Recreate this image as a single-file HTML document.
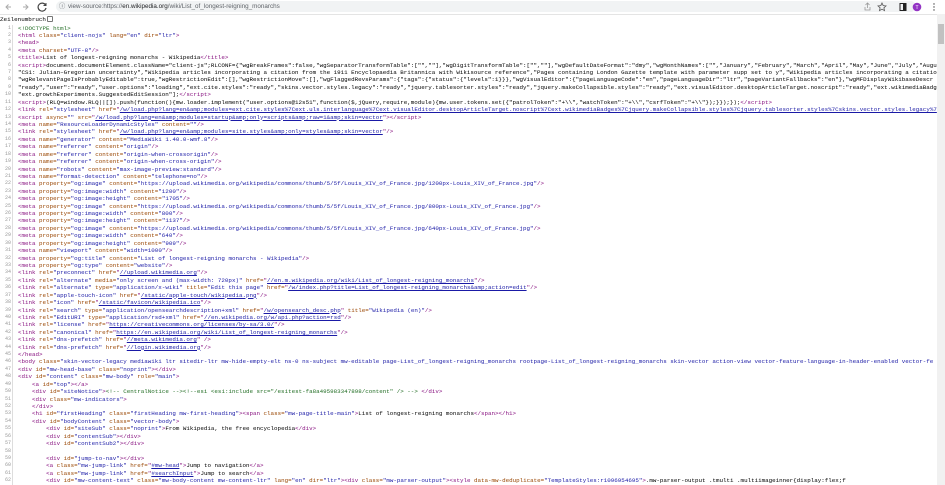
<!DOCTYPE html>
<html><head><meta charset="utf-8">
<style>
*{margin:0;padding:0;box-sizing:border-box}
body{width:945px;height:485px;overflow:hidden;background:#fff;font-family:"Liberation Sans",sans-serif;position:relative}
.bar{position:absolute;left:0;top:0;width:945px;height:14px;background:#fff}
.omni{position:absolute;left:56px;top:1px;width:860px;height:11px;background:#f1f3f4;border-radius:6px;font-size:6.3px;line-height:11px;color:#5f6368;padding-left:12px}
.omni b{font-weight:normal;color:#202124}
.sep{position:absolute;left:0;top:14px;width:937px;height:1px;background:#e4e4e4}
.zeil{position:absolute;left:0;top:16px;font-family:"Liberation Mono",monospace;font-size:5.9px;color:#000;line-height:8px}
.zeil i{display:inline-block;width:6px;height:6px;border:1px solid #777;border-radius:1px;vertical-align:-1px;margin-left:1px}
.code{position:absolute;left:0;top:24.5px;width:937px;font-family:"Liberation Mono",monospace;font-size:5.85px;line-height:7.43px;color:#000}
.code div{height:7.43px;overflow:hidden;white-space:pre}
.code s{text-decoration:none;display:inline-block;width:13px;text-align:right;color:#999;margin-right:5px;padding-right:1px;border-right:1px solid #ddd;font-size:5px;line-height:7.43px;vertical-align:top}
.t{color:#881280}.a{color:#994500}.v{color:#1a1aa6}.l{color:#1a1aa6;text-decoration:underline}.c{color:#236e25}
.sb{position:absolute;right:0;top:14px;width:8px;height:471px;background:#f1f1f1}
.sb i{position:absolute;left:1px;top:10px;width:6px;height:20px;background:#c1c1c1}
</style></head><body>
<div class="bar">
<svg style="position:absolute;left:5px;top:2px" width="44" height="10" viewBox="0 0 44 10"><path d="M6 5H1M3.5 2.5L1 5l2.5 2.5" stroke="#aaa" fill="none" stroke-width="1"/><path d="M18 5h5M20.5 2.5L23 5l-2.5 2.5" stroke="#aaa" fill="none" stroke-width="1"/><path d="M40.5 3A4 4 0 1 0 41 6" stroke="#444" fill="none" stroke-width="1.2"/><path d="M41 1v2.5h-2.5" stroke="#444" fill="none" stroke-width="1"/></svg>
<div class="omni"><span style="position:absolute;left:3px;top:0">ⓘ</span>view-source:https://<b>en.wikipedia.org</b>/wiki/List_of_longest-reigning_monarchs</div>
<svg style="position:absolute;left:862px;top:2px" width="83" height="10" viewBox="0 0 83 10"><path d="M3 5v3h5V5M5.5 1v5M3.5 3l2-2 2 2" stroke="#999" fill="none" stroke-width=".8"/><path d="M20 1l1.2 2.6 2.8.3-2.1 1.9.6 2.8L20 7.2l-2.5 1.4.6-2.8-2.1-1.9 2.8-.3z" stroke="#555" fill="none" stroke-width=".8"/><rect x="38" y="1.5" width="6" height="7" fill="none" stroke="#222" stroke-width="1"/><rect x="41" y="1.5" width="3" height="7" fill="#222"/><circle cx="55" cy="5" r="4.3" fill="#9334c4"/><text x="55" y="7" font-size="5" fill="#fff" text-anchor="middle" font-family="Liberation Sans">T</text><circle cx="72" cy="2" r=".7" fill="#444"/><circle cx="72" cy="5" r=".7" fill="#444"/><circle cx="72" cy="8" r=".7" fill="#444"/></svg>
</div>
<div class="sep"></div>
<div class="zeil">Zeilenumbruch<i></i></div>
<div class="code">
<div><s>1</s><span class="c">&lt;!DOCTYPE html&gt;</span></div>
<div><s>2</s><span class="t">&lt;html <span class="a">class=</span><span class="v">"client-nojs"</span> <span class="a">lang=</span><span class="v">"en"</span> <span class="a">dir=</span><span class="v">"ltr"</span>&gt;</span></div>
<div><s>3</s><span class="t">&lt;head&gt;</span></div>
<div><s>4</s><span class="t">&lt;meta <span class="a">charset=</span><span class="v">"UTF-8"</span>/&gt;</span></div>
<div><s>5</s><span class="t">&lt;title&gt;</span>List of longest-reigning monarchs - Wikipedia<span class="t">&lt;/title&gt;</span></div>
<div><s>6</s><span class="t">&lt;script&gt;</span>document.documentElement.className="client-js";RLCONF={"wgBreakFrames":false,"wgSeparatorTransformTable":["",""],"wgDigitTransformTable":["",""],"wgDefaultDateFormat":"dmy","wgMonthNames":["","January","February","March","April","May","June","July","August"</div>
<div><s>7</s>"CS1: Julian–Gregorian uncertainty","Wikipedia articles incorporating a citation from the 1911 Encyclopaedia Britannica with Wikisource reference","Pages containing London Gazette template with parameter supp set to y","Wikipedia articles incorporating a citation</div>
<div><s>8</s>"wgRelevantPageIsProbablyEditable":true,"wgRestrictionEdit":[],"wgRestrictionMove":[],"wgFlaggedRevsParams":{"tags":{"status":{"levels":1}}},"wgVisualEditor":{"pageLanguageCode":"en","pageLanguageDir":"ltr","pageVariantFallbacks":"en"},"wgMFDisplayWikibaseDescr</div>
<div><s>9</s>"ready","user":"ready","user.options":"loading","ext.cite.styles":"ready","skins.vector.styles.legacy":"ready","jquery.tablesorter.styles":"ready","jquery.makeCollapsible.styles":"ready","ext.visualEditor.desktopArticleTarget.noscript":"ready","ext.wikimediaBadges</div>
<div><s>10</s>"ext.growthExperiments.SuggestedEditSession"];<span class="t">&lt;/script&gt;</span></div>
<div><s>11</s><span class="t">&lt;script&gt;</span>(RLQ=window.RLQ||[]).push(function(){mw.loader.implement("user.options@12s51",function($,jQuery,require,module){mw.user.tokens.set({"patrolToken":"+\\","watchToken":"+\\","csrfToken":"+\\"});}});});<span class="t">&lt;/script&gt;</span></div>
<div><s>12</s><span class="t">&lt;link <span class="a">rel=</span><span class="v">"stylesheet"</span> <span class="a">href=</span>"<span class="l">/w/load.php?lang=en&amp;amp;modules=ext.cite.styles%7Cext.uls.interlanguage%7Cext.visualEditor.desktopArticleTarget.noscript%7Cext.wikimediaBadges%7Cjquery.makeCollapsible.styles%7Cjquery.tablesorter.styles%7Cskins.vector.styles.legacy%7</span></span></div>
<div><s>13</s><span class="t">&lt;script <span class="a">async=</span><span class="v">""</span> <span class="a">src=</span>"<span class="l">/w/load.php?lang=en&amp;amp;modules=startup&amp;amp;only=scripts&amp;amp;raw=1&amp;amp;skin=vector</span>"&gt;&lt;/script&gt;</span></div>
<div><s>14</s><span class="t">&lt;meta <span class="a">name=</span><span class="v">"ResourceLoaderDynamicStyles"</span> <span class="a">content=</span><span class="v">""</span>/&gt;</span></div>
<div><s>15</s><span class="t">&lt;link <span class="a">rel=</span><span class="v">"stylesheet"</span> <span class="a">href=</span>"<span class="l">/w/load.php?lang=en&amp;amp;modules=site.styles&amp;amp;only=styles&amp;amp;skin=vector</span>"/&gt;</span></div>
<div><s>16</s><span class="t">&lt;meta <span class="a">name=</span><span class="v">"generator"</span> <span class="a">content=</span><span class="v">"MediaWiki 1.40.0-wmf.8"</span>/&gt;</span></div>
<div><s>17</s><span class="t">&lt;meta <span class="a">name=</span><span class="v">"referrer"</span> <span class="a">content=</span><span class="v">"origin"</span>/&gt;</span></div>
<div><s>18</s><span class="t">&lt;meta <span class="a">name=</span><span class="v">"referrer"</span> <span class="a">content=</span><span class="v">"origin-when-crossorigin"</span>/&gt;</span></div>
<div><s>19</s><span class="t">&lt;meta <span class="a">name=</span><span class="v">"referrer"</span> <span class="a">content=</span><span class="v">"origin-when-cross-origin"</span>/&gt;</span></div>
<div><s>20</s><span class="t">&lt;meta <span class="a">name=</span><span class="v">"robots"</span> <span class="a">content=</span><span class="v">"max-image-preview:standard"</span>/&gt;</span></div>
<div><s>21</s><span class="t">&lt;meta <span class="a">name=</span><span class="v">"format-detection"</span> <span class="a">content=</span><span class="v">"telephone=no"</span>/&gt;</span></div>
<div><s>22</s><span class="t">&lt;meta <span class="a">property=</span><span class="v">"og:image"</span> <span class="a">content=</span><span class="v">"https://upload.wikimedia.org/wikipedia/commons/thumb/5/5f/Louis_XIV_of_France.jpg/1200px-Louis_XIV_of_France.jpg"</span>/&gt;</span></div>
<div><s>23</s><span class="t">&lt;meta <span class="a">property=</span><span class="v">"og:image:width"</span> <span class="a">content=</span><span class="v">"1200"</span>/&gt;</span></div>
<div><s>24</s><span class="t">&lt;meta <span class="a">property=</span><span class="v">"og:image:height"</span> <span class="a">content=</span><span class="v">"1705"</span>/&gt;</span></div>
<div><s>25</s><span class="t">&lt;meta <span class="a">property=</span><span class="v">"og:image"</span> <span class="a">content=</span><span class="v">"https://upload.wikimedia.org/wikipedia/commons/thumb/5/5f/Louis_XIV_of_France.jpg/800px-Louis_XIV_of_France.jpg"</span>/&gt;</span></div>
<div><s>26</s><span class="t">&lt;meta <span class="a">property=</span><span class="v">"og:image:width"</span> <span class="a">content=</span><span class="v">"800"</span>/&gt;</span></div>
<div><s>27</s><span class="t">&lt;meta <span class="a">property=</span><span class="v">"og:image:height"</span> <span class="a">content=</span><span class="v">"1137"</span>/&gt;</span></div>
<div><s>28</s><span class="t">&lt;meta <span class="a">property=</span><span class="v">"og:image"</span> <span class="a">content=</span><span class="v">"https://upload.wikimedia.org/wikipedia/commons/thumb/5/5f/Louis_XIV_of_France.jpg/640px-Louis_XIV_of_France.jpg"</span>/&gt;</span></div>
<div><s>29</s><span class="t">&lt;meta <span class="a">property=</span><span class="v">"og:image:width"</span> <span class="a">content=</span><span class="v">"640"</span>/&gt;</span></div>
<div><s>30</s><span class="t">&lt;meta <span class="a">property=</span><span class="v">"og:image:height"</span> <span class="a">content=</span><span class="v">"909"</span>/&gt;</span></div>
<div><s>31</s><span class="t">&lt;meta <span class="a">name=</span><span class="v">"viewport"</span> <span class="a">content=</span><span class="v">"width=1000"</span>/&gt;</span></div>
<div><s>32</s><span class="t">&lt;meta <span class="a">property=</span><span class="v">"og:title"</span> <span class="a">content=</span><span class="v">"List of longest-reigning monarchs - Wikipedia"</span>/&gt;</span></div>
<div><s>33</s><span class="t">&lt;meta <span class="a">property=</span><span class="v">"og:type"</span> <span class="a">content=</span><span class="v">"website"</span>/&gt;</span></div>
<div><s>34</s><span class="t">&lt;link <span class="a">rel=</span><span class="v">"preconnect"</span> <span class="a">href=</span>"<span class="l">//upload.wikimedia.org</span>"/&gt;</span></div>
<div><s>35</s><span class="t">&lt;link <span class="a">rel=</span><span class="v">"alternate"</span> <span class="a">media=</span><span class="v">"only screen and (max-width: 720px)"</span> <span class="a">href=</span>"<span class="l">//en.m.wikipedia.org/wiki/List_of_longest-reigning_monarchs</span>"/&gt;</span></div>
<div><s>36</s><span class="t">&lt;link <span class="a">rel=</span><span class="v">"alternate"</span> <span class="a">type=</span><span class="v">"application/x-wiki"</span> <span class="a">title=</span><span class="v">"Edit this page"</span> <span class="a">href=</span>"<span class="l">/w/index.php?title=List_of_longest-reigning_monarchs&amp;amp;action=edit</span>"/&gt;</span></div>
<div><s>37</s><span class="t">&lt;link <span class="a">rel=</span><span class="v">"apple-touch-icon"</span> <span class="a">href=</span>"<span class="l">/static/apple-touch/wikipedia.png</span>"/&gt;</span></div>
<div><s>38</s><span class="t">&lt;link <span class="a">rel=</span><span class="v">"icon"</span> <span class="a">href=</span>"<span class="l">/static/favicon/wikipedia.ico</span>"/&gt;</span></div>
<div><s>39</s><span class="t">&lt;link <span class="a">rel=</span><span class="v">"search"</span> <span class="a">type=</span><span class="v">"application/opensearchdescription+xml"</span> <span class="a">href=</span>"<span class="l">/w/opensearch_desc.php</span>" <span class="a">title=</span><span class="v">"Wikipedia (en)"</span>/&gt;</span></div>
<div><s>40</s><span class="t">&lt;link <span class="a">rel=</span><span class="v">"EditURI"</span> <span class="a">type=</span><span class="v">"application/rsd+xml"</span> <span class="a">href=</span>"<span class="l">//en.wikipedia.org/w/api.php?action=rsd</span>"/&gt;</span></div>
<div><s>41</s><span class="t">&lt;link <span class="a">rel=</span><span class="v">"license"</span> <span class="a">href=</span>"<span class="l">https://creativecommons.org/licenses/by-sa/3.0/</span>"/&gt;</span></div>
<div><s>42</s><span class="t">&lt;link <span class="a">rel=</span><span class="v">"canonical"</span> <span class="a">href=</span>"<span class="l">https://en.wikipedia.org/wiki/List_of_longest-reigning_monarchs</span>"/&gt;</span></div>
<div><s>43</s><span class="t">&lt;link <span class="a">rel=</span><span class="v">"dns-prefetch"</span> <span class="a">href=</span>"<span class="l">//meta.wikimedia.org</span>" /&gt;</span></div>
<div><s>44</s><span class="t">&lt;link <span class="a">rel=</span><span class="v">"dns-prefetch"</span> <span class="a">href=</span>"<span class="l">//login.wikimedia.org</span>"/&gt;</span></div>
<div><s>45</s><span class="t">&lt;/head&gt;</span></div>
<div><s>46</s><span class="t">&lt;body <span class="a">class=</span><span class="v">"skin-vector-legacy mediawiki ltr sitedir-ltr mw-hide-empty-elt ns-0 ns-subject mw-editable page-List_of_longest-reigning_monarchs rootpage-List_of_longest-reigning_monarchs skin-vector action-view vector-feature-language-in-header-enabled vector-fe</span></span></div>
<div><s>47</s><span class="t">&lt;div <span class="a">id=</span><span class="v">"mw-head-base"</span> <span class="a">class=</span><span class="v">"noprint"</span>&gt;&lt;/div&gt;</span></div>
<div><s>48</s><span class="t">&lt;div <span class="a">id=</span><span class="v">"content"</span> <span class="a">class=</span><span class="v">"mw-body"</span> <span class="a">role=</span><span class="v">"main"</span>&gt;</span></div>
<div><s>49</s>    <span class="t">&lt;a <span class="a">id=</span><span class="v">"top"</span>&gt;&lt;/a&gt;</span></div>
<div><s>50</s>    <span class="t">&lt;div <span class="a">id=</span><span class="v">"siteNotice"</span>&gt;</span><span class="c">&lt;!-- CentralNotice --&gt;&lt;!--esi &lt;esi:include src="/esitest-fa8a495983347898/content" /&gt; --&gt;</span> <span class="t">&lt;/div&gt;</span></div>
<div><s>51</s>    <span class="t">&lt;div <span class="a">class=</span><span class="v">"mw-indicators"</span>&gt;</span></div>
<div><s>52</s>    <span class="t">&lt;/div&gt;</span></div>
<div><s>53</s>    <span class="t">&lt;h1 <span class="a">id=</span><span class="v">"firstHeading"</span> <span class="a">class=</span><span class="v">"firstHeading mw-first-heading"</span>&gt;&lt;span <span class="a">class=</span><span class="v">"mw-page-title-main"</span>&gt;</span>List of longest-reigning monarchs<span class="t">&lt;/span&gt;&lt;/h1&gt;</span></div>
<div><s>54</s>    <span class="t">&lt;div <span class="a">id=</span><span class="v">"bodyContent"</span> <span class="a">class=</span><span class="v">"vector-body"</span>&gt;</span></div>
<div><s>55</s>        <span class="t">&lt;div <span class="a">id=</span><span class="v">"siteSub"</span> <span class="a">class=</span><span class="v">"noprint"</span>&gt;</span>From Wikipedia, the free encyclopedia<span class="t">&lt;/div&gt;</span></div>
<div><s>56</s>        <span class="t">&lt;div <span class="a">id=</span><span class="v">"contentSub"</span>&gt;&lt;/div&gt;</span></div>
<div><s>57</s>        <span class="t">&lt;div <span class="a">id=</span><span class="v">"contentSub2"</span>&gt;&lt;/div&gt;</span></div>
<div><s>58</s></div>
<div><s>59</s>        <span class="t">&lt;div <span class="a">id=</span><span class="v">"jump-to-nav"</span>&gt;&lt;/div&gt;</span></div>
<div><s>60</s>        <span class="t">&lt;a <span class="a">class=</span><span class="v">"mw-jump-link"</span> <span class="a">href=</span>"<span class="l">#mw-head</span>"&gt;</span>Jump to navigation<span class="t">&lt;/a&gt;</span></div>
<div><s>61</s>        <span class="t">&lt;a <span class="a">class=</span><span class="v">"mw-jump-link"</span> <span class="a">href=</span>"<span class="l">#searchInput</span>"&gt;</span>Jump to search<span class="t">&lt;/a&gt;</span></div>
<div><s>62</s>        <span class="t">&lt;div <span class="a">id=</span><span class="v">"mw-content-text"</span> <span class="a">class=</span><span class="v">"mw-body-content mw-content-ltr"</span> <span class="a">lang=</span><span class="v">"en"</span> <span class="a">dir=</span><span class="v">"ltr"</span>&gt;&lt;div <span class="a">class=</span><span class="v">"mw-parser-output"</span>&gt;&lt;style <span class="a">data-mw-deduplicate=</span><span class="v">"TemplateStyles:r1096954695"</span>&gt;</span>.mw-parser-output .tmulti .multiimageinner{display:flex;f</div>
</div>
<div class="sb"><i></i></div>
</body></html>
